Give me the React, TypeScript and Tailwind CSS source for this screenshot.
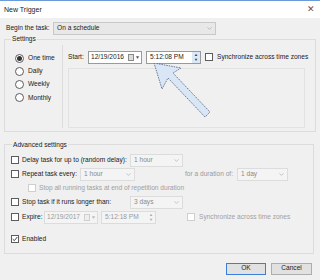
import { ChevronDown } from "lucide-react";

function Check({ checked = false, disabled = false }: { checked?: boolean; disabled?: boolean }) {
  return (
    <span
      className={`inline-flex items-center justify-center w-[8px] h-[8px] border bg-white shrink-0 ${
        disabled ? "border-[#cfcfcf]" : "border-[#5c5c5c]"
      }`}
    >
      {checked && (
        <svg width="6" height="6" viewBox="0 0 7 7">
          <path d="M0.8 3.6 L2.7 5.4 L6.2 1.2" stroke="#333" strokeWidth="1.1" fill="none" />
        </svg>
      )}
    </span>
  );
}

function Radio({ checked = false }: { checked?: boolean }) {
  return (
    <span className="inline-flex items-center justify-center w-[9px] h-[9px] rounded-full border border-[#5c5c5c] bg-white shrink-0">
      {checked && <span className="w-[5px] h-[5px] rounded-full bg-[#333]" />}
    </span>
  );
}

function Combo({ text, w, disabled = false }: { text: string; w: string; disabled?: boolean }) {
  return (
    <div
      className={`flex items-center justify-between h-[13px] border pl-[3px] pr-[2px] shrink-0 ${w} ${
        disabled ? "border-[#dcdcdc] bg-[#f4f4f4] text-[#8a8a8a]" : "border-[#c8c8c8] bg-[#e8e8e8] text-[#222]"
      }`}
    >
      <span>{text}</span>
      <ChevronDown size={7} strokeWidth={1.5} className="text-[#888]" />
    </div>
  );
}

function DateBox({ text, disabled = false }: { text: string; disabled?: boolean }) {
  return (
    <div
      className={`flex items-center justify-between h-[13px] w-[54px] border pl-[2px] pr-[1px] shrink-0 ${
        disabled ? "border-[#dcdcdc] bg-[#f4f4f4] text-[#9a9a9a]" : "border-[#9a9a9a] bg-white text-[#222]"
      }`}
    >
      <span>{text}</span>
      <span className="flex items-center gap-[1px]">
        <span className={`w-[6px] h-[7px] border ${disabled ? "border-[#cfcfcf] bg-[#eee]" : "border-[#8a8a8a] bg-[#ddd]"}`} />
        <span className={`text-[5px] ${disabled ? "text-[#bbb]" : "text-[#555]"}`}>▼</span>
      </span>
    </div>
  );
}

function TimeBox({ text, disabled = false }: { text: string; disabled?: boolean }) {
  return (
    <div
      className={`flex items-center justify-between h-[13px] w-[55px] border pl-[3px] shrink-0 ${
        disabled ? "border-[#dcdcdc] bg-[#f4f4f4] text-[#9a9a9a]" : "border-[#9a9a9a] bg-white text-[#222]"
      }`}
    >
      <span>{text}</span>
      <span
        className={`flex flex-col items-center justify-center w-[8px] h-full text-[4px] leading-[5px] ${
          disabled ? "text-[#aaa]" : "bg-[#dde8f5] text-[#333]"
        }`}
      >
        <span>▲</span>
        <span>▼</span>
      </span>
    </div>
  );
}

export default function App() {
  return (
    <div className="w-[320px] h-[280px] bg-[#f0f0f0] text-[6.6px] text-[#1a1a1a] font-['Liberation_Sans',Arial,sans-serif] leading-none whitespace-nowrap overflow-hidden flex flex-col">
      <div className="h-[18px] bg-white border-t border-[#6b9bd8] flex items-center justify-between pl-[4px] pr-[5px]">
        <span className="text-[#222] text-[7px]">New Trigger</span>
        <span className="text-[#555] text-[9px]">✕</span>
      </div>

      <div className="flex items-center mt-[4px] pl-[6px]">
        <span className="w-[47px]">Begin the task:</span>
        <Combo text="On a schedule" w="w-[163px]" />
      </div>

      <fieldset className="mx-[4px] mt-[1px] border border-[#dcdcdc] px-[5px] pb-[3px]">
        <legend className="px-[1px] ml-[1px]">Settings</legend>
        <div className="flex">
          <div className="w-[52px] flex flex-col gap-[4.3px] pl-[5px] pt-[11px]">
            <label className="flex items-center gap-[4px]"><Radio checked />One time</label>
            <label className="flex items-center gap-[4px]"><Radio />Daily</label>
            <label className="flex items-center gap-[4px]"><Radio />Weekly</label>
            <label className="flex items-center gap-[4px]"><Radio />Monthly</label>
          </div>
          <div className="w-px bg-[#dcdcdc] mt-[2px]" />
          <div className="flex-1 pl-[5px] pt-[8px] flex flex-col relative">
            <div className="flex items-center">
              <span className="w-[20px]">Start:</span>
              <DateBox text="12/19/2016" />
              <span className="w-[4px]" />
              <TimeBox text="5:12:08 PM" />
              <span className="w-[4px]" />
              <Check />
              <span className="ml-[4px]">Synchronize across time zones</span>
            </div>
            <div className="mt-[4px] mr-[5px] h-[60px] border border-[#e2e2e2]" />
            <svg className="absolute left-[91px] top-[20px]" width="60" height="60" viewBox="0 0 60 60">
              <path
                d="M0 0 L27 5 L19 10 L56 49 L51 54 L14 15 L8 26 Z"
                fill="#d8e6f6"
                stroke="#4a5a78"
                strokeWidth="0.8"
                strokeDasharray="1.5 1"
              />
            </svg>
          </div>
        </div>
      </fieldset>

      <fieldset className="ml-[4px] mr-[6px] mt-[10px] border border-[#dcdcdc] h-[112px] pl-[6px] pr-[4px]">
        <legend className="px-[1px] ml-[1px]">Advanced settings</legend>
        <div className="flex flex-col">
          <div className="flex items-center h-[14px] mt-[5px]">
            <Check />
            <span className="ml-[3px] w-[108px] shrink-0">Delay task for up to (random delay):</span>
            <Combo text="1 hour" w="w-[53px]" disabled />
          </div>
          <div className="flex items-center h-[14px]">
            <Check />
            <span className="ml-[3px] w-[58px] shrink-0">Repeat task every:</span>
            <Combo text="1 hour" w="w-[55px]" disabled />
            <span className="ml-[50px] w-[52px] shrink-0 text-[#9a9a9a]">for a duration of:</span>
            <Combo text="1 day" w="w-[51px]" disabled />
          </div>
          <div className="flex items-center h-[14px] pl-[17px]">
            <Check disabled />
            <span className="ml-[3px] text-[#a0a0a0]">Stop all running tasks at end of repetition duration</span>
          </div>
          <div className="flex items-center h-[14px]">
            <Check />
            <span className="ml-[3px] w-[108px] shrink-0">Stop task if it runs longer than:</span>
            <Combo text="3 days" w="w-[53px]" disabled />
          </div>
          <div className="flex items-center h-[14px] mt-[1px]">
            <Check />
            <span className="ml-[3px] w-[22px] shrink-0">Expire:</span>
            <DateBox text="12/19/2017" disabled />
            <span className="w-[3px]" />
            <TimeBox text="5:12:18 PM" disabled />
            <span className="w-[31px]" />
            <Check disabled />
            <span className="ml-[4px] text-[#a0a0a0]">Synchronize across time zones</span>
          </div>
          <div className="flex items-center h-[14px] mt-[8px]">
            <Check checked />
            <span className="ml-[3px]">Enabled</span>
          </div>
        </div>
      </fieldset>

      <div className="flex justify-end gap-[5px] pr-[8px] mt-[9px]">
        <button className="w-[40px] h-[12px] border border-[#3c7fd8] bg-[#e1e1e1] text-[6.6px] flex items-center justify-center">OK</button>
        <button className="w-[41px] h-[12px] border border-[#adadad] bg-[#e1e1e1] text-[6.6px] flex items-center justify-center">Cancel</button>
      </div>
    </div>
  );
}
